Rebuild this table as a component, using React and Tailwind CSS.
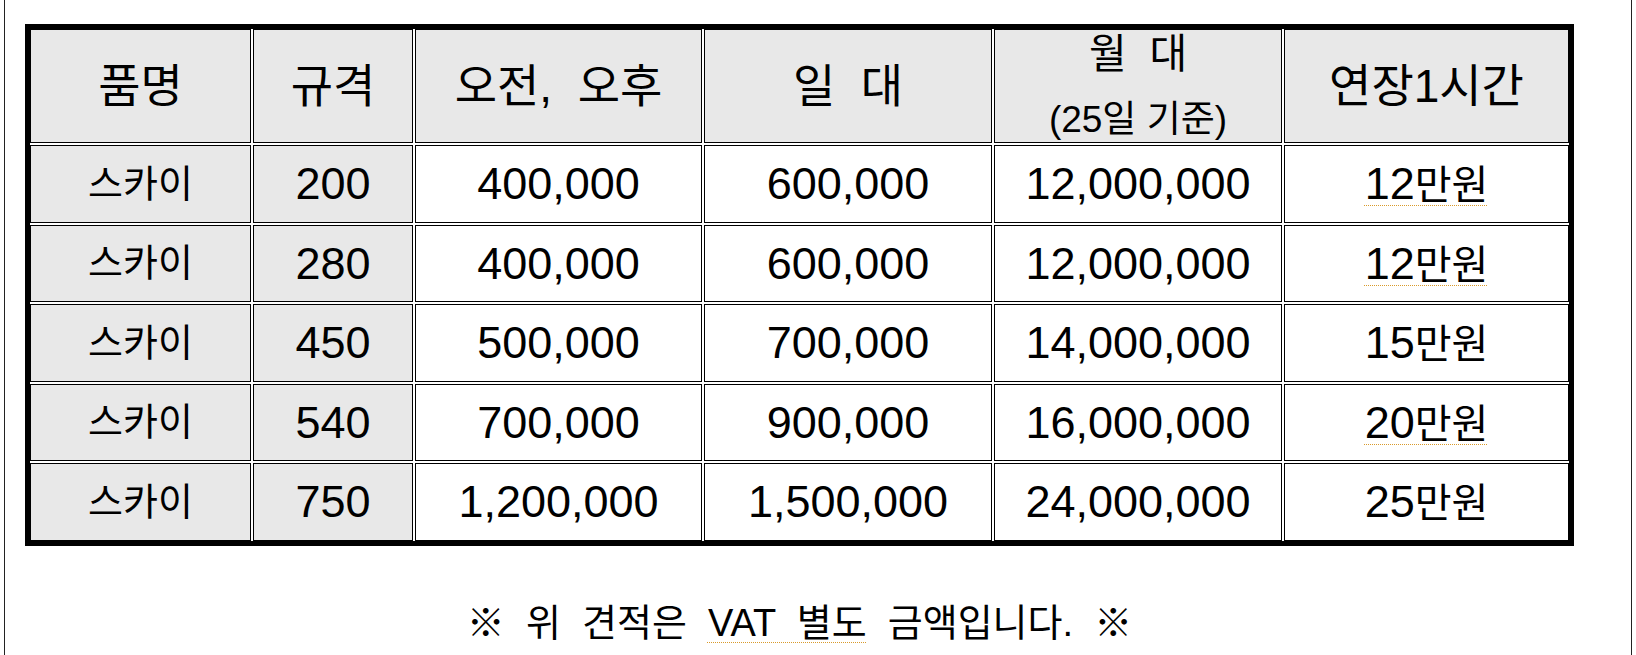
const rows = [
  { spec: "200", am: "400,000", day: "600,000", month: "12,000,000", ext: "12", mark: true },
  { spec: "280", am: "400,000", day: "600,000", month: "12,000,000", ext: "12", mark: true },
  { spec: "450", am: "500,000", day: "700,000", month: "14,000,000", ext: "15", mark: false },
  { spec: "540", am: "700,000", day: "900,000", month: "16,000,000", ext: "20", mark: true },
  { spec: "750", am: "1,200,000", day: "1,500,000", month: "24,000,000", ext: "25", mark: false },
];

function HeadCell({ children }) {
  return (
    <div className="border border-black bg-[#e8e8e8] flex items-center justify-center text-[46px] leading-[48px] whitespace-pre">
      {children}
    </div>
  );
}

function GrayCell({ children, className = "" }) {
  return (
    <div className={"border border-black bg-[#e8e8e8] flex items-center justify-center leading-none " + className}>
      {children}
    </div>
  );
}

function WhiteCell({ children, className = "" }) {
  return (
    <div className={"border border-black bg-white flex items-center justify-center leading-none " + className}>
      {children}
    </div>
  );
}

export default function App() {
  return (
    <div className="h-[655px] w-[1636px] bg-white overflow-hidden text-black font-['Liberation_Sans','Noto_Sans_CJK_KR',sans-serif]">
      <div className="ml-[4px] w-[1628px] h-full border-x border-[#222] pt-[24px] pl-[20px]">
        <div className="w-[1549px] border-[5px] border-black bg-white">
          <div className="grid grid-cols-[221px_160px_287px_288px_288px_285px] grid-rows-[114px_repeat(5,77.5px)] gap-[2px]">
            <HeadCell>품명</HeadCell>
            <HeadCell>규격</HeadCell>
            <HeadCell>오전,  오후</HeadCell>
            <HeadCell>일  대</HeadCell>
            <div className="border border-black bg-[#e8e8e8] flex flex-col items-center justify-center gap-[24px] whitespace-pre">
              <div className="text-[41px] leading-[44px]">월  대</div>
              <div className="text-[37px] leading-[40px]">(25일 기준)</div>
            </div>
            <HeadCell>연장1시간</HeadCell>
            {rows.map((r, i) => (
              <div key={i} className="contents">
                <GrayCell className="text-[38px]">스카이</GrayCell>
                <GrayCell className="text-[45px]">{r.spec}</GrayCell>
                <WhiteCell className="text-[45px]">{r.am}</WhiteCell>
                <WhiteCell className="text-[45px]">{r.day}</WhiteCell>
                <WhiteCell className="text-[45px]">{r.month}</WhiteCell>
                <WhiteCell>
                  <span
                    className={
                      r.mark
                        ? "underline decoration-dotted decoration-[#d99a2b] decoration-1 underline-offset-[6px]"
                        : ""
                    }
                  >
                    <span className="text-[45px]">{r.ext}</span>
                    <span className="text-[40px]">만원</span>
                  </span>
                </WhiteCell>
              </div>
            ))}
          </div>
        </div>
        <div className="w-[1549px] mt-[57px] text-center text-[38px] leading-[40px] whitespace-pre">
          {"※  위  견적은  "}
          <span className="underline decoration-dotted decoration-[#d99a2b] decoration-1 underline-offset-[6px]">VAT  별도</span>
          {"  금액입니다.  ※"}
        </div>
      </div>
    </div>
  );
}
